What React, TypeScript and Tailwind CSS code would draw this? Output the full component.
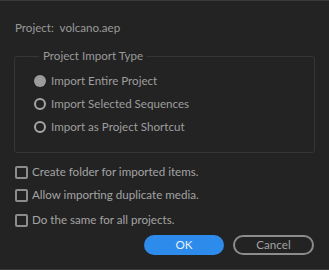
import React from "react";

const font = { fontFamily: "Lato, 'Open Sans', sans-serif" };

function Radio({ checked, label }: { checked?: boolean; label: string }) {
  return (
    <div className="flex items-center h-[16px]">
      {checked ? (
        <span className="w-[12px] h-[12px] rounded-full bg-[#9c9c9c]" />
      ) : (
        <span className="w-[12px] h-[12px] rounded-full border-2 border-[#a6a6a6]" />
      )}
      <span className="ml-[5px] text-[11.6px] text-[#9e9e9e]">{label}</span>
    </div>
  );
}

function Check({ label, className }: { label: string; className?: string }) {
  return (
    <div className={"flex items-center h-[16px] " + (className ?? "")}>
      <span className="w-[13px] h-[13px] rounded-[2px] border-2 border-[#8c8c8c]" />
      <span className="ml-[4px] text-[11.6px] text-[#a3a3a3]">{label}</span>
    </div>
  );
}

export default function App() {
  return (
    <div
      className="w-[329px] h-[270px] bg-[#232323] border-t border-b border-[#3a3a3a] flex flex-col"
      style={font}
    >
      <div className="mt-[19px] px-[15px] h-[16px] flex items-center text-[11.6px] text-[#9a9a9a]">
        Project:&nbsp;&nbsp;volcano.aep
      </div>
      <fieldset className="mt-[12px] mx-[14px] border border-[#363636] rounded-[3px] pl-[19px] pb-[17px]">
        <legend className="ml-[5px] px-[4px] text-[11.6px] text-[#9a9a9a] leading-[16px]">
          Project Import Type
        </legend>
        <div className="flex flex-col gap-[7px] pt-[9px]">
          <Radio checked label="Import Entire Project" />
          <Radio label="Import Selected Sequences" />
          <Radio label="Import as Project Shortcut" />
        </div>
      </fieldset>
      <div className="px-[15px] mt-[11px]">
        <Check label="Create folder for imported items." />
        <Check className="mt-[7px]" label="Allow importing duplicate media." />
        <Check className="mt-[9px]" label="Do the same for all projects." />
      </div>
      <div className="flex justify-end gap-[9px] pr-[15px] mt-[7px]">
        <button className="w-[80px] h-[20px] rounded-full bg-[#2d8ceb] text-[#e8f1fb] text-[11.6px] leading-none">
          OK
        </button>
        <button className="w-[81px] h-[20px] rounded-full border-2 border-[#8c8c8c] text-[#a3a3a3] text-[11.6px] leading-none">
          Cancel
        </button>
      </div>
    </div>
  );
}
